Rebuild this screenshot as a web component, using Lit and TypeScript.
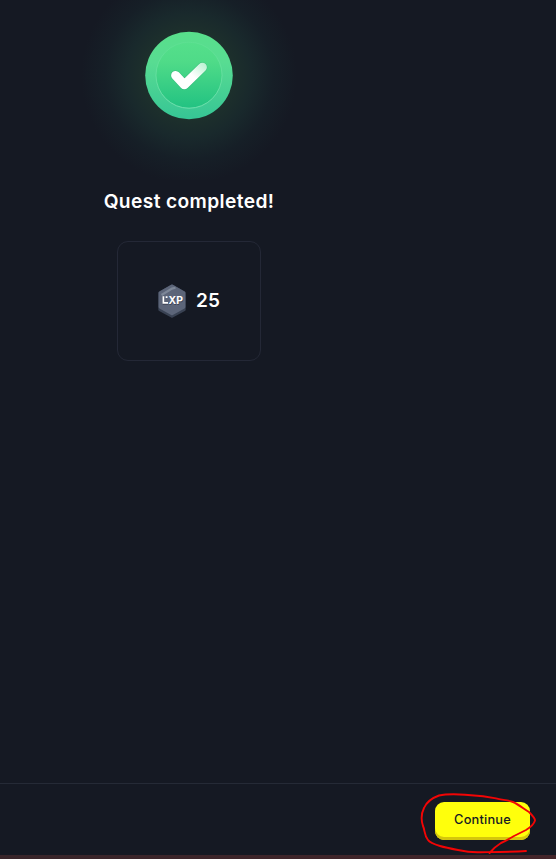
import { LitElement, html, css } from "lit";
import { customElement } from "lit/decorators.js";

@customElement("success-medal")
class SuccessMedal extends LitElement {
  static styles = css`
    :host { display: block; width: 220px; height: 180px; }
    svg { display: block; }
  `;
  render() {
    return html`<svg width="220" height="180" viewBox="0 0 220 180">
      <defs>
        <radialGradient id="glow" gradientUnits="userSpaceOnUse" cx="109" cy="75.5" r="108">
          <stop offset="0" stop-color="#1e3a30" />
          <stop offset=".4" stop-color="#1d302c" />
          <stop offset=".58" stop-color="#19292c" />
          <stop offset=".78" stop-color="#161f27" />
          <stop offset="1" stop-color="#151923" />
        </radialGradient>
        <linearGradient id="rim" x1="0" y1="0" x2="0" y2="1">
          <stop offset="0" stop-color="#58df8b" />
          <stop offset=".35" stop-color="#58dc92" />
          <stop offset="1" stop-color="#36c595" />
        </linearGradient>
        <linearGradient id="face" x1="0" y1="0" x2="0" y2="1">
          <stop offset="0" stop-color="#55df8b" />
          <stop offset=".3" stop-color="#4fdb88" />
          <stop offset="1" stop-color="#22c282" />
        </linearGradient>
        <linearGradient id="edge" x1="0" y1="0" x2="0" y2="1">
          <stop offset="0" stop-color="#7eeaac" stop-opacity=".15" />
          <stop offset="1" stop-color="#82e6b8" stop-opacity=".8" />
        </linearGradient>
        <linearGradient id="tick" gradientUnits="userSpaceOnUse" x1="125" y1="63" x2="113" y2="76">
          <stop offset="0" stop-color="#b9f1d0" />
          <stop offset="1" stop-color="#fff" />
        </linearGradient>
      </defs>
      <rect width="220" height="180" fill="url(#glow)" />
      <circle cx="109" cy="75.5" r="43.8" fill="url(#rim)" />
      <circle cx="109" cy="75.2" r="33" fill="url(#face)" stroke="url(#edge)" />
      <path d="M95.6 75.4 L104.4 84.8 L122.4 67.2" fill="none" stroke="#198b61" stroke-opacity=".3"
        stroke-width="10" stroke-linecap="round" stroke-linejoin="round" />
      <path d="M95.6 75.4 L104.4 84.8 L122.4 67.2" fill="none" stroke="url(#tick)"
        stroke-width="9" stroke-linecap="round" stroke-linejoin="round" />
    </svg>`;
  }
}

@customElement("xp-badge")
class XpBadge extends LitElement {
  static styles = css`
    :host { display: block; width: 28px; height: 34px; }
    svg { display: block; }
    .label { font: 700 10.2px Inter, sans-serif; fill: #fff; }
    .shade { fill: #3c4355; }
  `;
  render() {
    return html`<svg width="28" height="34" viewBox="0 0 28 34">
      <path d="M14 2.2 L26 9 V25.5 L14 32 L2 25.5 V9 Z" fill="#394253" stroke="#394253" stroke-width="3.4" stroke-linejoin="round" />
      <path d="M14 2.2 L25.7 9 V23 L14 29.6 L2.3 23 V9 Z" fill="#5c6579" stroke="#5c6579" stroke-width="3.4" stroke-linejoin="round" />
      <path d="M3.5 11 L14 4.6 L17.5 3.8" fill="none" stroke="#7d8798" stroke-width="2.2" />
      <path d="M5.6 13.4 V20 H10.2" fill="none" stroke="#3c4355" stroke-width="1.7" />
      <text class="label shade" x="11" y="20.6" textLength="14.4" lengthAdjust="spacingAndGlyphs">XP</text>
      <path d="M5.4 12.2 V18.8 H10" fill="none" stroke="#fff" stroke-width="1.7" />
      <path d="M7.7 12.2 h1.8 v1.8 h-1.8 z" fill="#fff" />
      <text class="label" x="10.6" y="19.6" textLength="14.4" lengthAdjust="spacingAndGlyphs">XP</text>
    </svg>`;
  }
}

@customElement("app-root")
class AppRoot extends LitElement {
  static styles = css`
    :host {
      display: flex; flex-direction: column; position: relative; box-sizing: border-box;
      width: 100%; height: 859px; overflow: hidden; background: #151923; color: #fff;
      font-family: Inter, sans-serif;
    }
    main { flex: 1; width: 378px; display: flex; flex-direction: column; align-items: center; }
    success-medal { margin-left: 2px; }
    h1 { margin: 8px 0 0; font-size: 19.2px; line-height: 26px; font-weight: 600; letter-spacing: .38px; white-space: nowrap; }
    .reward {
      box-sizing: border-box; width: 144px; height: 120px; margin-top: 27px;
      border: 1px solid #242836; border-radius: 11px;
      display: flex; align-items: center; justify-content: center; gap: 10px;
    }
    .amount { font-size: 19px; line-height: 24px; font-weight: 600; }
    footer {
      box-sizing: border-box; height: 72px; padding: 18px 26px 0 0; border-top: 1px solid #252a36;
      display: flex; justify-content: flex-end; align-items: flex-start;
    }
    button {
      box-sizing: border-box; width: 95px; height: 38px; padding: 0 0 3px; border: 0; border-radius: 9px;
      background: #ffff0c; box-shadow: inset 0 -3px #d5c70c; color: #161a24;
      font: 450 12.8px Inter, sans-serif; letter-spacing: .2px;
    }
    .strip { height: 4px; background: linear-gradient(90deg, #38252a, #44252a); }
    .scribble { position: absolute; left: 410px; top: 785px; pointer-events: none; }
  `;
  render() {
    return html`
      <main>
        <success-medal></success-medal>
        <h1>Quest completed!</h1>
        <section class="reward"><xp-badge></xp-badge><span class="amount">25</span></section>
      </main>
      <footer><button>Continue</button></footer>
      <div class="strip"></div>
      <svg class="scribble" width="146" height="74" viewBox="0 0 146 74">
        <path d="M116 66 C101 67 86 67 70 67.2 C63 67.5 55 66.5 48 65 C40 63.5 35 62.5 30 61 C25 59.5 20 58 18 55 C14 50 15 45 13 41 C11 35 11.5 28 14 23 C17 16 22 13 29 10.5 C36 9 44 9 55 9.7 L73 11.2 L86 13.4 C92 15 98 15 103 17 C108 19 114 24 119 27 C122 30 125 33 125 35.5 C124 39 121 42 116 45 L104 51 C99 54 96 56 91 58 C86 61 83 64 79.5 68"
          fill="none" stroke="#f20505" stroke-width="1.9" stroke-linecap="round" stroke-linejoin="round" />
      </svg>
    `;
  }
}
